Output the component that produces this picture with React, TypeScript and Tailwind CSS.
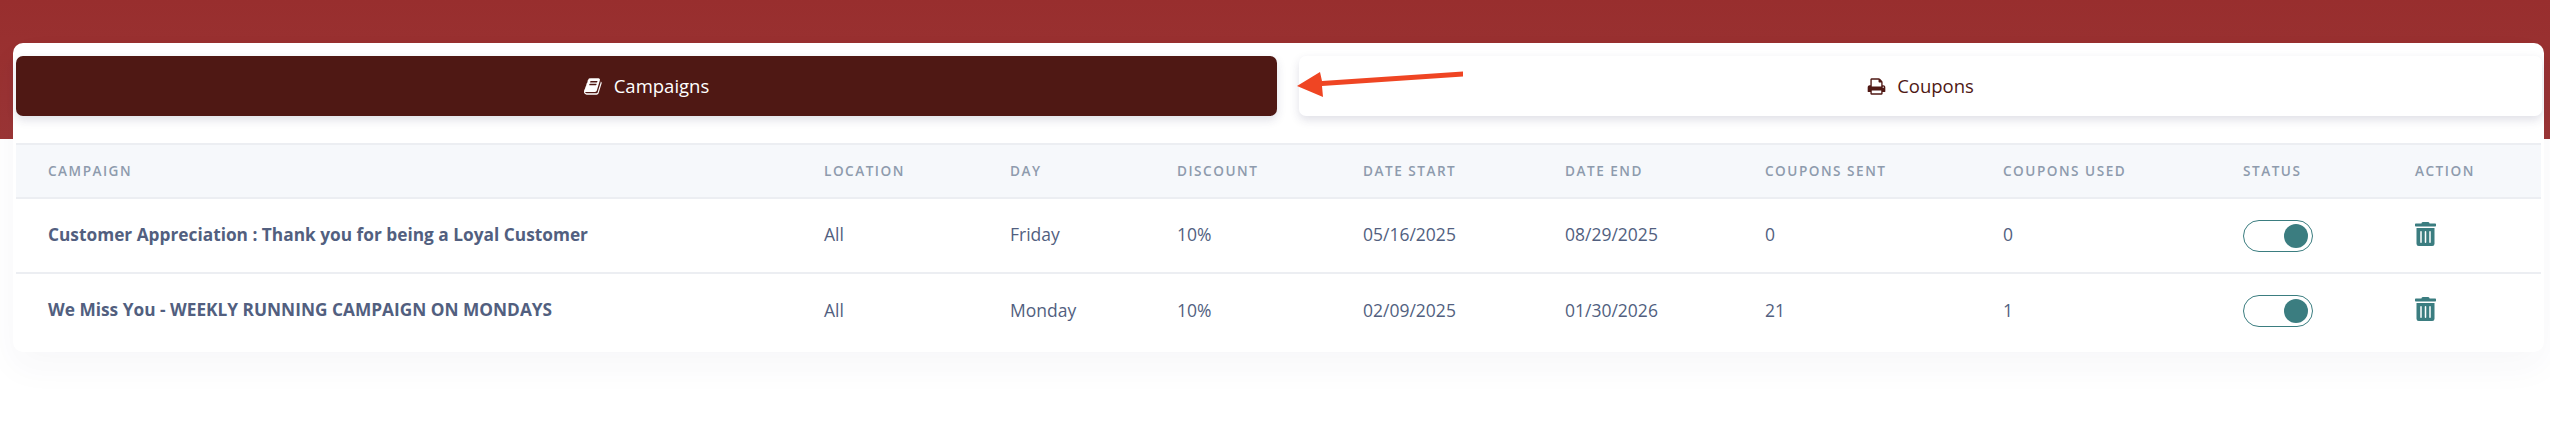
import { FaTrashAlt } from "react-icons/fa"

const rows = [
    { name: "Customer Appreciation : Thank you for being a Loyal Customer", location: "All", day: "Friday", discount: "10%", start: "05/16/2025", end: "08/29/2025", sent: "0", used: "0" },
    { name: "We Miss You - WEEKLY RUNNING CAMPAIGN ON MONDAYS", location: "All", day: "Monday", discount: "10%", start: "02/09/2025", end: "01/30/2026", sent: "21", used: "1" },
]

const columns = [
    { label: "Campaign", width: "w-[776px]" },
    { label: "Location", width: "w-[186px]" },
    { label: "Day", width: "w-[167px]" },
    { label: "Discount", width: "w-[186px]" },
    { label: "Date Start", width: "w-[202px]" },
    { label: "Date End", width: "w-[200px]" },
    { label: "Coupons Sent", width: "w-[238px]" },
    { label: "Coupons Used", width: "w-[240px]" },
    { label: "Status", width: "w-[172px]" },
    { label: "Action", width: "w-[158px]" },
]

function BookIcon() {
    return (
        <svg viewBox="0 0 1792 1792" className="w-[19px] h-[19px] fill-current">
            <path d="M1639 478q40 57 18 129l-275 906q-19 64-76.5 107.5t-122.5 43.5h-923q-77 0-148.5-53.5t-99.5-131.5q-24-67-2-127 0-4 3-27t4-37q1-8-3-21.5t-3-19.5q2-11 8-21t16.5-23.5 16.5-23.5q23-38 45-91.5t30-91.5q3-10 .5-30t-.5-28q3-11 17-28t17-23q21-36 42-92t25-90q1-9-2.5-32t.5-28q4-13 22-30.5t22-22.5q19-26 42.5-84.5t27.5-96.5q1-8-3-25.5t-2-26.5q2-8 9-18t18-23 17-21q8-12 16.5-30.5t15-35 16-36 19.5-32 26.5-23.5 36-11.5 47.5 5.5l-1 3q38-9 51-9h761q74 0 114 56t18 130l-274 906q-36 119-71.5 153.5t-128.5 34.5h-869q-27 0-38 15-11 16-1 43 24 70 144 70h923q29 0 56-15.5t35-41.5l300-987q7-22 5-57 38 15 59 43zm-1064 2q-4 13 2 22.5t20 9.5h608q13 0 25.5-9.5t16.5-22.5l21-64q4-13-2-22.5t-20-9.5h-608q-13 0-25.5 9.5t-16.5 22.5zm-83 256q-4 13 2 22.5t20 9.5h608q13 0 25.5-9.5t16.5-22.5l21-64q4-13-2-22.5t-20-9.5h-608q-13 0-25.5 9.5t-16.5 22.5z" />
        </svg>
    )
}

function PrintIcon() {
    return (
        <svg viewBox="0 0 1792 1792" className="w-[19px] h-[19px] fill-current">
            <path d="M448 1536h896v-256h-896v256zm0-640h896v-384h-160q-40 0-68-28t-28-68v-160h-640v640zm1152 64q0-26-19-45t-45-19-45 19-19 45 19 45 45 19 45-19 19-45zm128 0v416q0 13-9.5 22.5t-22.5 9.5h-224v160q0 40-28 68t-68 28h-960q-40 0-68-28t-28-68v-160h-224q-13 0-22.5-9.5t-9.5-22.5v-416q0-79 56.5-135.5t135.5-56.5h64v-544q0-40 28-68t68-28h672q40 0 88 20t76 48l152 152q28 28 48 76t20 88v256h64q79 0 135.5 56.5t56.5 135.5z" />
        </svg>
    )
}

function Toggle() {
    return (
        <div className="w-[70px] h-[32px] rounded-full border border-[#3b7d80] bg-white flex items-center justify-end pr-[4px]">
            <div className="w-[24px] h-[24px] rounded-full bg-[#3b7d80]" />
        </div>
    )
}

export default function App() {
    return (
        <div className="relative w-[2550px] h-[434px] overflow-hidden bg-white font-['Open_Sans',sans-serif]">
            <div className="h-[139px] bg-gradient-to-b from-[#982e2e] to-[#9b3535]" />

            <div className="relative mt-[-96px] ml-[13px] w-[2531px] rounded-[10px] bg-white px-[3px] pt-[13px] pb-[4px] shadow-[0_15px_35px_rgba(50,50,93,0.04)]">
                {/* Tabs */}
                <div className="flex gap-[22px] mr-[-1px]">
                    <button className="w-[1261px] h-[60px] rounded-[7px] bg-[#4f1814] text-white text-[18.5px] flex items-center justify-center gap-[11px] shadow-[0_4px_10px_rgba(50,50,93,0.15)]">
                        <BookIcon />
                        Campaigns
                    </button>
                    <button className="flex-1 h-[60px] rounded-[7px] bg-white text-[#4f1814] text-[18.5px] flex items-center justify-center gap-[11px] shadow-[0_4px_10px_rgba(50,50,93,0.15)]">
                        <PrintIcon />
                        Coupons
                    </button>
                </div>

                <table className="mt-[27px] w-[2525px] table-fixed border-collapse">
                    <thead>
                        <tr className="h-[54px] bg-[#f6f8fb] border-y-2 border-[#eceef2]">
                            {columns.map((col) => (
                                <th key={col.label} className={`${col.width} pl-[32px] text-left text-[13.6px] font-semibold uppercase tracking-[1.5px] text-[#8e9bad]`}>
                                    {col.label}
                                </th>
                            ))}
                        </tr>
                    </thead>
                    <tbody>
                        {rows.map((row, i) => (
                            <tr key={row.name} className={`h-[75px] text-[17.5px] text-[#525f7f] ${i === 0 ? "border-b-2 border-[#eceef2]" : ""}`}>
                                <td className="pl-[32px] pb-[2px] text-[17.3px] font-bold whitespace-nowrap">{row.name}</td>
                                <td className="pl-[32px] pb-[2px]">{row.location}</td>
                                <td className="pl-[32px] pb-[2px]">{row.day}</td>
                                <td className="pl-[32px] pb-[2px]">{row.discount}</td>
                                <td className="pl-[32px] pb-[2px]">{row.start}</td>
                                <td className="pl-[32px] pb-[2px]">{row.end}</td>
                                <td className="pl-[32px] pb-[2px]">{row.sent}</td>
                                <td className="pl-[32px] pb-[2px]">{row.used}</td>
                                <td className="pl-[32px]"><Toggle /></td>
                                <td className="pl-[32px]">
                                    <FaTrashAlt className="w-[21px] h-[24px] text-[#3b7d80] mb-[4px]" />
                                </td>
                            </tr>
                        ))}
                    </tbody>
                </table>
            </div>

            {/* annotation arrow drawn over the tabs */}
            <svg className="absolute left-[1290px] top-[66px]" width="180" height="36" viewBox="1290 66 180 36">
                <polygon points="1297,86 1320,72 1322,81 1463,71.5 1463,76.5 1322,86 1323,97" fill="#ef4523" />
            </svg>
        </div>
    )
}
